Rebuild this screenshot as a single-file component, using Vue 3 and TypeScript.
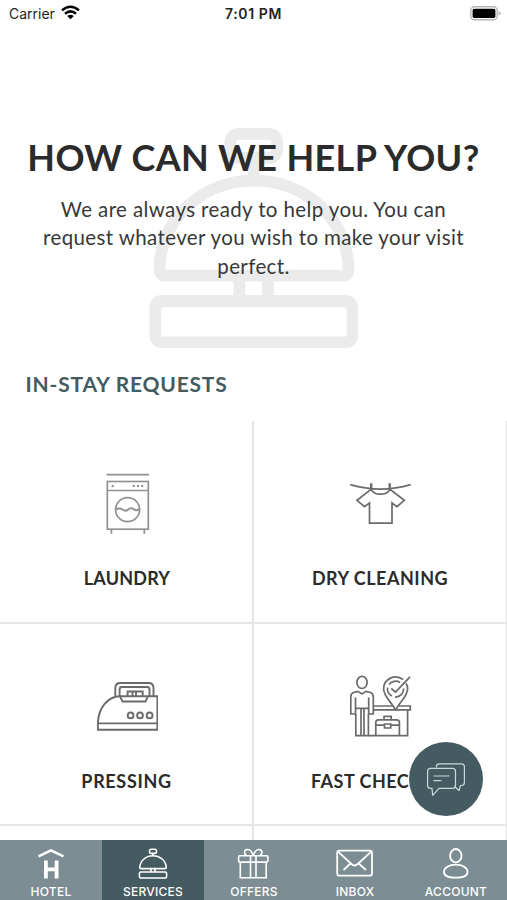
<script setup lang="ts">
interface Service {
  id: string
  label: string
}

interface Tab {
  id: string
  label: string
}

const services: Service[] = [
  { id: 'laundry', label: 'LAUNDRY' },
  { id: 'dry', label: 'DRY CLEANING' },
  { id: 'pressing', label: 'PRESSING' },
  { id: 'checkin', label: 'FAST CHECK-IN' },
  { id: 'more-left', label: '' },
  { id: 'more-right', label: '' },
]

const tabs: Tab[] = [
  { id: 'hotel', label: 'HOTEL' },
  { id: 'services', label: 'SERVICES' },
  { id: 'offers', label: 'OFFERS' },
  { id: 'inbox', label: 'INBOX' },
  { id: 'account', label: 'ACCOUNT' },
]

const activeTab = 'services'
</script>

<template>
  <div class="screen">
    <header class="status">
      <div class="carrier">
        <span>Carrier</span>
        <svg class="wifi" width="19" height="15" viewBox="0 0 19 15">
          <g fill="none" stroke="#000" stroke-width="2.5">
            <path d="M1 5.4Q9.5-2 18 5.4" />
            <path d="M4 8.7Q9.5 4 15 8.7" />
          </g>
          <path d="M6.2 10.9Q9.5 8.4 12.8 10.9L9.5 14.3Z" fill="#000" />
        </svg>
      </div>
      <div class="clock">7:01 PM</div>
      <div class="power">
        <svg width="31" height="15" viewBox="0 0 31 15">
          <rect x="0.8" y="0.8" width="26.4" height="13" rx="3.8" fill="#fff" stroke="#b5b5b5" stroke-width="1.4" />
          <rect x="2.600" y="2.800" width="22.800" height="9.100" rx="1.600" fill="#000" />
          <path d="M28.6 5v4.6q2-.7 2-2.3t-2-2.3z" fill="#b5b5b5" />
        </svg>
      </div>
    </header>

    <main class="content">
      <section class="hero">
        <svg class="watermark" width="210" height="222" viewBox="149 127 210 222">
          <g fill="none" stroke="#ebebeb" stroke-width="11.8">
            <path d="M239.300 280v16M268 280v16M254 158v18" />
            <path d="M165.500 275.700H342.500Q349 275.700 348.500 268C346.500 217 304 180.500 254 180.500S161.500 217 159.500 268Q159 275.700 165.500 275.700Z" />
            <rect x="230.300" y="133.800" width="46.800" height="24" rx="8" />
          </g>
          <path fill="#ebebeb" fill-rule="evenodd" d="M161.500 295H346a12 12 0 0 1 12 12V336a12 12 0 0 1-12 12H161.500a12 12 0 0 1-12-12V307a12 12 0 0 1 12-12ZM164 307a3 3 0 0 0-3 3V336.500H346.500V310a3 3 0 0 0-3-3Z" />
        </svg>
        <h1>HOW CAN WE HELP YOU?</h1>
        <p>
          We are always ready to help you. You can<br />
          request whatever you wish to make your visit<br />
          perfect.
        </p>
      </section>

      <h2>IN-STAY REQUESTS</h2>

      <section class="grid">
        <article v-for="s in services" :key="s.id" class="cell">
          <svg v-if="s.id === 'laundry'" class="icon" width="64" height="64" viewBox="94 471 64 64">
            <g fill="none" stroke="#929292" stroke-width="1.700">
              <path d="M106.500 474.700H149" />
              <rect x="107.300" y="481.500" width="41" height="47.700" />
              <path d="M107.300 490.500h41M111.400 529.500v4.300M144.300 529.500v4.300" />
              <circle cx="127.600" cy="509.700" r="12" />
              <path d="M115.800 509.500c3-1.500 5-1.200 7 .2s4 1 5.500-.3 4-1.600 5.500-.2 3.500 1.400 5.700 0" stroke-width="2" />
            </g>
            <g fill="#929292">
              <circle cx="112.700" cy="486" r="1.200" />
              <circle cx="133.800" cy="486" r="1.200" />
              <circle cx="138" cy="486" r="1.200" />
              <circle cx="142.200" cy="486" r="1.200" />
            </g>
          </svg>
          <svg v-else-if="s.id === 'dry'" class="icon" width="64" height="64" viewBox="348 471 64 64">
            <g fill="none" stroke="#6b6b6b" stroke-width="1.700">
              <path d="M350.300 484.600Q380.500 493.500 410.700 484.600" />
              <path d="M371.200 483.300v6.200M389.700 483.300v6.200" stroke-width="2.400" />
              <path d="M371 489.300L357 500.300L364.500 506.600L369.500 503V523.200H392V503L397 506.600L404.300 500.300L390 489.300Q387.500 494.200 380.500 494.200T371 489.300Z" />
            </g>
          </svg>
          <svg v-else-if="s.id === 'pressing'" class="icon" width="64" height="64" viewBox="94 674 64 64">
            <g fill="none" stroke="#6b6b6b" stroke-width="1.900">
              <path d="M97.900 729.700H157.400V696.300H120C108 696.300 97.900 708 97.900 724Z" />
              <path d="M97.900 723.400H157.400" />
              <path d="M115.300 696V688Q115.300 683 120.300 683H148.500Q153.500 683 153.500 688V696" />
              <path d="M119.600 696V689.500Q119.600 687 122 687H147Q149.500 687 149.500 689.500V696" />
              <path d="M120 696.300L122.500 701.500H145.500L147.800 696.300" />
              <path d="M127.600 696V691.500H142.700V696M132.500 696V691.500M136 696V691.500" />
              <circle cx="130.600" cy="715.400" r="2.900" />
              <circle cx="140" cy="715.400" r="2.900" />
              <circle cx="149.600" cy="715.400" r="2.900" />
            </g>
          </svg>
          <svg v-else-if="s.id === 'checkin'" class="icon" width="64" height="64" viewBox="348 674 64 64">
            <g fill="none" stroke="#6b6b6b" stroke-width="1.700">
              <ellipse cx="362" cy="682.400" rx="5.100" ry="6.100" />
              <path d="M358 691.400L362 694L366 691.400L370.500 692.500Q373.300 693.500 373.300 697V714H368.700V697.500M358 691.400L353.500 692.500Q350.800 693.500 350.800 697V714H355.500V697.500" />
              <path d="M355.800 708.300H368.500M355.800 714V735.600H368.400V714M361 709V735M364 709V735" />
              <path d="M373.300 706H392.500M398.500 706H410.300V709.800H373.300M407.600 709.800V735.600H368.500" />
              <path d="M395.600 710.500C392 702 383.600 697 383.600 688.800A12 12 0 0 1 403 679.500M406 683.200Q407.600 685.500 407.600 688.800C407.600 697 399 702 395.600 710.500" />
              <path d="M391.200 688.500L395.500 692L410 676.800" />
              <path d="M400 682.500A8 8 0 0 0 389 684.600M387.600 687.500A8 8 0 0 0 392 696M395 697A8 8 0 0 0 403.600 688.500" />
              <path d="M375.800 735.600V722.500Q375.800 719.800 378.500 719.800H396.700Q399.400 719.800 399.400 722.500V735.600M375.800 725.200H384M391.200 725.200H399.400M384 719.800V716.300H391.200V719.800M384.500 724V728H390.700V724Z" />
            </g>
          </svg>
          <span v-if="s.label" class="label" :class="s.id">{{ s.label }}</span>
        </article>
      </section>
    </main>

    <button class="fab" aria-label="Chat">
      <svg width="42" height="36" viewBox="425 760 42 36">
        <g fill="none" stroke="#c9d8db" stroke-width="1.200" stroke-linejoin="round">
          <path d="M436.500 766.500V765.500Q436.500 762.800 439.500 762.800H461.500Q464.400 762.800 464.400 765.700V781.500Q464.400 784.500 461.500 784.500H460.500L459 789.500L454.500 785.500" />
          <path d="M430.500 767.300H452.500Q455.500 767.300 455.500 770.300V784.500Q455.500 787.400 452.500 787.400H439L432.700 794.300L432 787.400H430.500Q427.600 787.400 427.600 784.500V770.300Q427.600 767.300 430.500 767.300Z" />
          <path d="M433.500 775H449.500M433.500 779.700H441.500" />
        </g>
      </svg>
    </button>

    <nav class="tabs">
      <a v-for="t in tabs" :key="t.id" class="tab" :class="{ active: t.id === activeTab }">
        <svg v-if="t.id === 'hotel'" width="40" height="34" viewBox="31 847 40 34">
          <path d="M38.500 856.300L51 850.300L63.500 856.300" fill="none" stroke="#fff" stroke-width="2.500" />
          <path d="M45.900 860.500V878.500M56.600 860.500V878.500M45.900 869.300H56.600" fill="none" stroke="#fff" stroke-width="3.800" />
        </svg>
        <svg v-else-if="t.id === 'services'" width="40" height="34" viewBox="133 847 40 34">
          <g fill="none" stroke="#fff" stroke-width="1.600">
            <rect x="149.500" y="849.200" width="7" height="4.200" rx="1.900" />
            <path d="M153 853.400V856" />
            <path d="M141 868.600H165Q166.300 868.600 166.200 867.200C165.800 860.500 160 855.800 153 855.800S140.200 860.500 139.800 867.200Q139.700 868.600 141 868.600ZM151 868.600V872M155 868.600V872" />
            <rect x="139.400" y="872" width="27.200" height="6" rx="1.500" />
          </g>
        </svg>
        <svg v-else-if="t.id === 'offers'" width="40" height="34" viewBox="234 847 40 34">
          <g fill="none" stroke="#fff" stroke-width="1.600">
            <rect x="238.600" y="855.700" width="29.300" height="6.400" rx="1" />
            <path d="M240.300 862V877.700H266.200V862M250.500 856V877.700M256 856V877.700" />
            <path d="M253.200 855.500C251.500 850.500 249.500 849.300 247 849.600C244 850 243.800 854 246.500 855.500M253.200 855.500C255 850.500 257 849.300 259.500 849.600C262.500 850 262.700 854 260 855.500" />
          </g>
        </svg>
        <svg v-else-if="t.id === 'inbox'" width="40" height="34" viewBox="335 847 40 34">
          <g fill="none" stroke="#fff" stroke-width="1.800">
            <rect x="337.200" y="850.700" width="34.800" height="25" rx="2.200" />
            <path d="M338 851.700L351.500 864Q354.600 867 357.700 864L371.300 851.700M350.500 863.500L343.500 870M358.700 863.500L366 870" />
          </g>
        </svg>
        <svg v-else width="40" height="34" viewBox="436 847 40 34">
          <g fill="none" stroke="#fff" stroke-width="1.800">
            <ellipse cx="455.800" cy="855.700" rx="5.700" ry="6.700" />
            <path d="M444 872C444 867.500 449 864.700 455.800 864.700S467.500 867.500 467.500 872S462.500 877.700 455.800 877.700S444 876.500 444 872Z" />
          </g>
        </svg>
        <span>{{ t.label }}</span>
      </a>
    </nav>
  </div>
</template>

<style>
body {
  background: #fff;
}
</style>

<style scoped>
.screen {
  position: relative;
  display: flex;
  flex-direction: column;
  height: 900px;
  overflow: hidden;
  background: #fff;
  font-family: Lato, 'Open Sans', sans-serif;
  color: #2b2b2b;
}

.status {
  display: grid;
  grid-template-columns: 1fr auto 1fr;
  align-items: center;
  flex: none;
  height: 27px;
  padding: 0 6px 0 9px;
  font-family: Inter, sans-serif;
  font-size: 14px;
  color: #222;
}

.carrier {
  display: flex;
  align-items: center;
  gap: 6px;
}

.wifi {
  margin-top: -2px;
}

.clock {
  margin-right: 3px;
  font-weight: 600;
  letter-spacing: 0.6px;
}

.power {
  display: flex;
  justify-content: flex-end;
}

.content {
  flex: 1;
  min-height: 0;
  overflow: hidden;
}

.hero {
  position: relative;
  height: 326px;
  padding-top: 109px;
  box-sizing: border-box;
  text-align: center;
}

.watermark {
  position: absolute;
  left: 149px;
  top: 100px;
}

h1 {
  position: relative;
  margin: 0;
  font-size: 36px;
  line-height: 42px;
  font-weight: 700;
  letter-spacing: 0.37px;
  white-space: nowrap;
}

p {
  position: relative;
  margin: 17px 0 0;
  font-size: 20.5px;
  line-height: 28.3px;
  letter-spacing: 0.38px;
  color: #383838;
  white-space: nowrap;
}

h2 {
  margin: 0;
  height: 68px;
  padding: 18px 0 0 25.5px;
  box-sizing: border-box;
  font-size: 21px;
  line-height: 26px;
  font-weight: 700;
  letter-spacing: 0.8px;
  color: #445b61;
}

.grid {
  display: grid;
  grid-template-columns: 254px 254px;
  grid-template-rows: 203px 202px 202px;
}

.cell {
  display: flex;
  flex-direction: column;
  align-items: center;
  padding-top: 50px;
  box-sizing: border-box;
  border-right: 2px solid #e4e4e4;
  border-bottom: 2px solid #e6e6e6;
}

.icon {
  flex: none;
}

.label {
  margin-top: 32px;
  font-size: 18px;
  line-height: 22px;
  font-weight: 700;
  letter-spacing: 0.5px;
  white-space: nowrap;
}

.laundry {
  padding-left: 2px;
  letter-spacing: 0.2px;
}

.pressing {
  padding-left: 1px;
  letter-spacing: 0.65px;
}

.fab {
  position: absolute;
  left: 409px;
  top: 742px;
  display: flex;
  align-items: center;
  justify-content: center;
  width: 74px;
  height: 74px;
  padding: 0;
  border: 0;
  border-radius: 50%;
  background: #445b61;
}

.tabs {
  display: grid;
  grid-template-columns: 102px 102px 100px 102px 100px;
  flex: none;
  height: 60px;
  background: #7c8e93;
}

.tab {
  display: flex;
  flex-direction: column;
  align-items: center;
  padding-top: 7px;
  color: #fff;
  font-family: Inter, sans-serif;
  font-size: 12px;
  line-height: 18px;
  font-weight: 500;
  letter-spacing: 0.25px;
}

.tab svg {
  flex: none;
  margin-bottom: 2px;
}

.active {
  background: #445b61;
}
</style>
